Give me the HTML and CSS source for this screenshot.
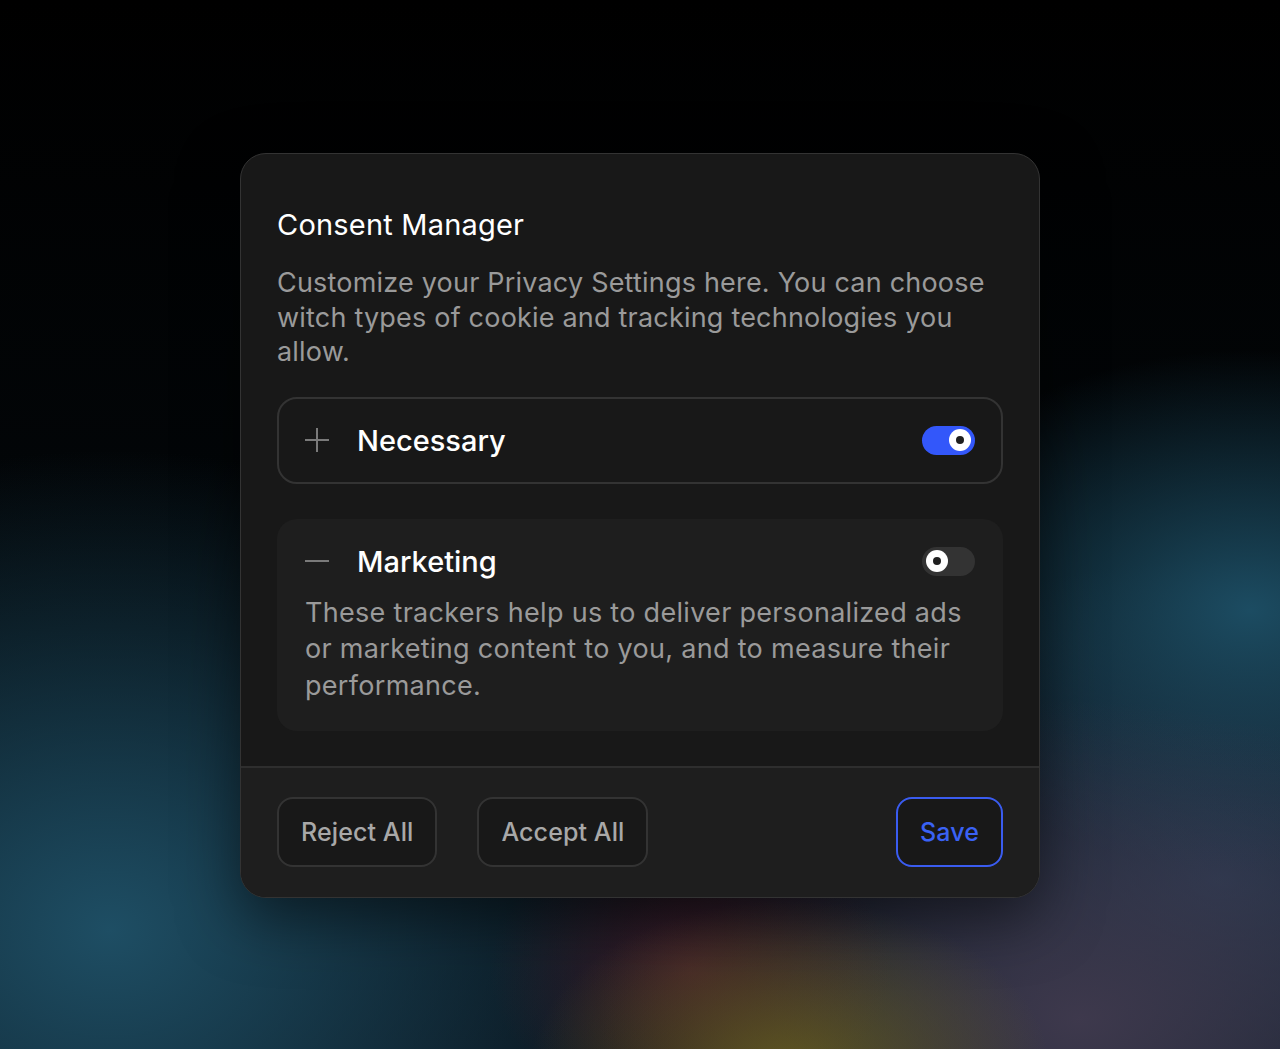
FILE: index.html
```html
<!DOCTYPE html>
<html lang="en">
<head>
<meta charset="utf-8">
<title>Consent Manager</title>
<link rel="stylesheet" href="styles.css">
</head>
<body>
<div class="backdrop">
  <div class="card">
    <div class="body">
      <h1 class="title">Consent Manager</h1>
      <p class="intro">Customize your Privacy Settings here. You can choose witch types of cookie and tracking technologies you allow.</p>
      <div class="item item-bordered">
        <div class="row">
          <svg class="icon" width="24" height="24" viewBox="0 0 24 24"><path d="M12 0v24M0 12h24" stroke="#7a7a7a" stroke-width="2" fill="none"/></svg>
          <span class="label">Necessary</span>
          <span class="toggle on"><span class="knob"></span></span>
        </div>
      </div>
      <div class="item item-filled">
        <div class="row">
          <svg class="icon" width="24" height="24" viewBox="0 0 24 24"><path d="M0 12h24" stroke="#7a7a7a" stroke-width="2" fill="none"/></svg>
          <span class="label">Marketing</span>
          <span class="toggle"><span class="knob"></span></span>
        </div>
        <p class="desc">These trackers help us to deliver personalized ads or marketing content to you, and to measure their performance.</p>
      </div>
    </div>
    <div class="footer">
      <button class="btn">Reject All</button>
      <button class="btn">Accept All</button>
      <button class="btn btn-primary">Save</button>
    </div>
  </div>
</div>
</body>
</html>
```

FILE: styles.css
```css
* { box-sizing: border-box; }
html, body { margin: 0; padding: 0; }
body {
  font-family: Inter, "Noto Sans", sans-serif;
  background: #000;
}
.backdrop {
  width: 1280px;
  height: 1049px;
  overflow: hidden;
  padding-top: 153px;
  display: flex;
  justify-content: center;
  align-items: flex-start;
  background:
    radial-gradient(ellipse 260px 170px at 790px 1070px, rgba(110, 100, 30, 0.8), rgba(110,100,30,0) 100%),
    radial-gradient(ellipse 200px 150px at 690px 970px, rgba(72, 30, 45, 0.8), rgba(72,30,45,0) 100%),
    radial-gradient(ellipse 480px 320px at 1080px 1020px, rgba(64, 58, 78, 0.95), rgba(64,58,78,0) 100%),
    radial-gradient(ellipse 380px 260px at 1250px 610px, rgba(28, 76, 98, 1), rgba(28,76,98,0) 100%),
    radial-gradient(ellipse 580px 480px at 110px 930px, rgba(30, 78, 100, 1), rgba(30,78,100,0) 100%),
    radial-gradient(ellipse 500px 320px at 1220px 880px, rgba(42, 62, 88, 0.85), rgba(42,62,88,0) 100%),
    linear-gradient(180deg, #000 0%, #03070a 60%, #081018 100%);
}
.card {
  width: 800px;
  background: #181818;
  border: 1px solid #333;
  border-radius: 26px;
  overflow: hidden;
  box-shadow: 0 20px 60px rgba(0,0,0,0.5);
}
.body {
  padding: 54px 36px 35px;
}
.title {
  margin: 0;
  font-size: 29px;
  line-height: 34px;
  font-weight: 400;
  letter-spacing: 0.2px;
  color: #fff;
}
.intro {
  margin: 24px 0 27px;
  font-size: 27px;
  line-height: 34.5px;
  letter-spacing: 0.2px;
  color: #9a9a9a;
}
.item {
  border-radius: 20px;
  padding: 27px 26px;
  border: 2px solid transparent;
}
.item-bordered {
  border-color: #333;
  margin-bottom: 35px;
}
.item-filled {
  background: #1e1e1e;
  padding-top: 26px;
  padding-bottom: 25px;
}
.row {
  display: flex;
  align-items: center;
  height: 29px;
}
.icon { flex: none; }
.label {
  flex: 1;
  margin-left: 28px;
  font-size: 29px;
  font-weight: 500;
  color: #fff;
}
.toggle {
  flex: none;
  position: relative;
  width: 53px;
  height: 29px;
  border-radius: 15px;
  background: #333;
}
.toggle.on { background: #3357fa; }
.knob {
  position: absolute;
  top: 3.5px;
  left: 4px;
  width: 22px;
  height: 22px;
  border-radius: 50%;
  background: #fff;
  display: flex;
  align-items: center;
  justify-content: center;
}
.knob::after {
  content: "";
  width: 8px;
  height: 8px;
  border-radius: 50%;
  background: #1f1f1f;
}
.toggle.on .knob { left: 27px; }
.desc {
  margin: 19px 0 0;
  font-size: 27px;
  line-height: 36.5px;
  letter-spacing: 0.3px;
  color: #9a9a9a;
}
.footer {
  background: #1e1e1e;
  border-top: 2px solid #2e2e2e;
  padding: 29px 36px 30px;
  display: flex;
  gap: 40px;
}
.btn {
  height: 70px;
  padding: 0 22px;
  border: 2px solid #333;
  border-radius: 16px;
  background: #181818;
  color: #a8a8a8;
  font-family: Inter, "Noto Sans", sans-serif;
  font-size: 25px;
  font-weight: 500;
  letter-spacing: 0.1px;
}
.btn-primary {
  margin-left: auto;
  border-color: #3a5cf0;
  color: #3a62f5;
}
```
